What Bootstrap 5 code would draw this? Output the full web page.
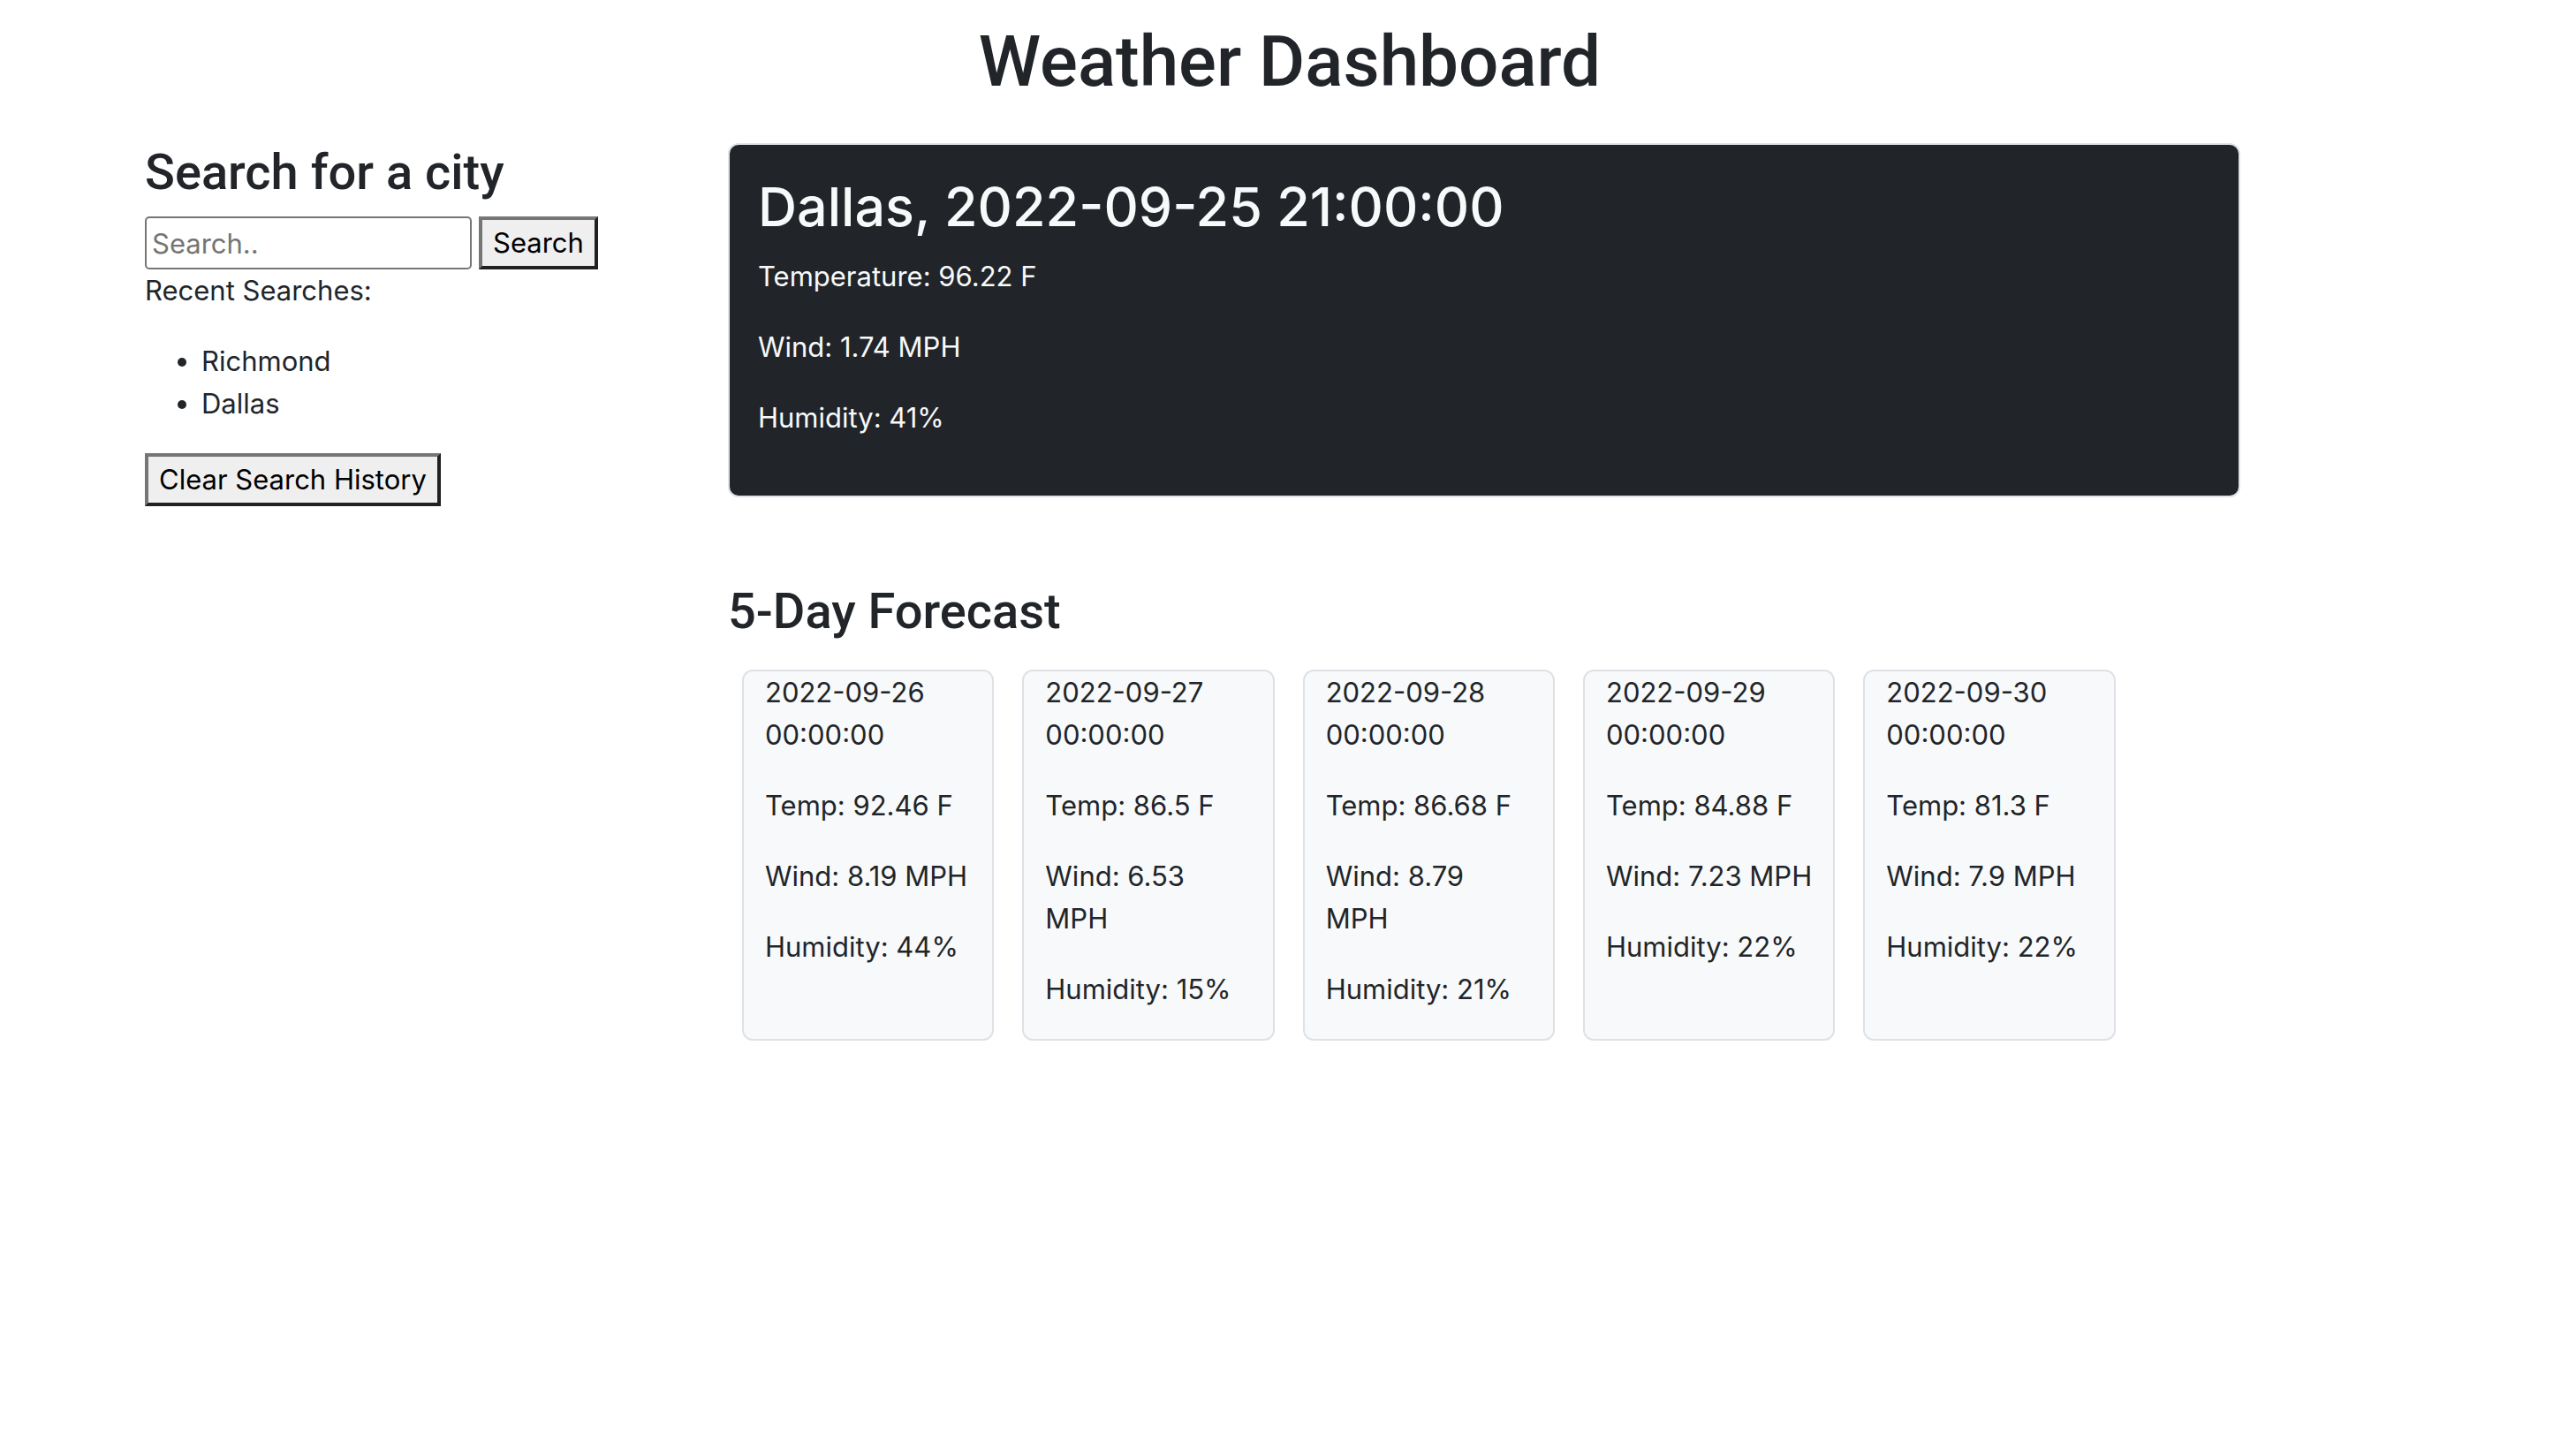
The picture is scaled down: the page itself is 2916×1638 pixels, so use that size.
<!DOCTYPE html>
<html lang="en">
<head>
<meta charset="utf-8">
<meta name="viewport" content="width=device-width, initial-scale=1">
<title>Weather Dashboard</title>
<link href="https://cdn.jsdelivr.net/npm/bootstrap@5.3.0/dist/css/bootstrap.min.css" rel="stylesheet">
<style>
  :root { font-size: 32px; }
  body { font-family: Inter, "Liberation Sans", sans-serif; font-size: 31px; line-height: 48px; color: #212529; padding-left: 4px; }
  h1, h3 { font-family: Roboto, Inter, sans-serif; font-weight: 500; }
  h1 { font-size: 80px; line-height: 96px; }
  h2 { font-size: 61px; line-height: 77px; margin-bottom: 16px; }
  h3 { font-size: 56px; line-height: 67px; margin-bottom: 16px; }
  p, ul { margin-bottom: 32px; }
  .page-title { padding-top: 22px; margin-bottom: 44px; }
  .dash { max-width: 2640px; }
  .dash > .row { --bs-gutter-x: 48px; }
  .search-row { gap: 8px; }
  .search-box { width: 370px; height: 60px; padding: 2px 6px; border: 2px solid #767676; border-radius: 5px; line-height: 48px; }
  .search-box::placeholder { color: #757575; }
  .plain-btn { height: 60px; padding: 2px 12px; border: 4px solid; border-color: #767676 #212121 #212121 #767676; background: #efefef; color: #000; white-space: nowrap; line-height: 48px; }
  .recent { padding-left: 64px; }
  .panel { border: 2px solid #dee2e6; border-radius: 12px; }
  .panel.bg-dark { padding: 32px; margin-bottom: 96px; }
  .panel.bg-light { padding: 0 24px; margin: 16px; white-space: nowrap; }
</style>
<script src="https://cdn.jsdelivr.net/npm/bootstrap@5.3.0/dist/js/bootstrap.bundle.min.js"></script>
</head>
<body>
<header><h1 class="page-title text-center">Weather Dashboard</h1></header>
<main class="container dash">
  <div class="row">
    <aside class="col-3">
      <h3><label for="city">Search for a city</label></h3>
      <form class="search-row d-flex" onsubmit="return false">
        <input class="search-box" id="city" type="text" placeholder="Search..">
        <button class="plain-btn" type="submit">Search</button>
      </form>
      <p>Recent Searches:</p>
      <ul class="recent">
        <li>Richmond</li>
        <li>Dallas</li>
      </ul>
      <button class="plain-btn" type="button">Clear Search History</button>
    </aside>
    <div class="col-8">
      <section class="panel bg-dark text-light">
        <h2>Dallas, 2022-09-25 21:00:00</h2>
        <p>Temperature: 96.22 F</p>
        <p>Wind: 1.74 MPH</p>
        <p>Humidity: 41%</p>
      </section>
      <section>
        <h3>5-Day Forecast</h3>
        <div class="row g-0">
          <article class="panel bg-light col-2">
            <p>2022-09-26<br>00:00:00</p>
            <p>Temp: 92.46 F</p>
            <p>Wind: 8.19 MPH</p>
            <p>Humidity: 44%</p>
          </article>
          <article class="panel bg-light col-2">
            <p>2022-09-27<br>00:00:00</p>
            <p>Temp: 86.5 F</p>
            <p>Wind: 6.53<br>MPH</p>
            <p>Humidity: 15%</p>
          </article>
          <article class="panel bg-light col-2">
            <p>2022-09-28<br>00:00:00</p>
            <p>Temp: 86.68 F</p>
            <p>Wind: 8.79<br>MPH</p>
            <p>Humidity: 21%</p>
          </article>
          <article class="panel bg-light col-2">
            <p>2022-09-29<br>00:00:00</p>
            <p>Temp: 84.88 F</p>
            <p>Wind: 7.23 MPH</p>
            <p>Humidity: 22%</p>
          </article>
          <article class="panel bg-light col-2">
            <p>2022-09-30<br>00:00:00</p>
            <p>Temp: 81.3 F</p>
            <p>Wind: 7.9 MPH</p>
            <p>Humidity: 22%</p>
          </article>
        </div>
      </section>
    </div>
  </div>
</main>
</body>
</html>
